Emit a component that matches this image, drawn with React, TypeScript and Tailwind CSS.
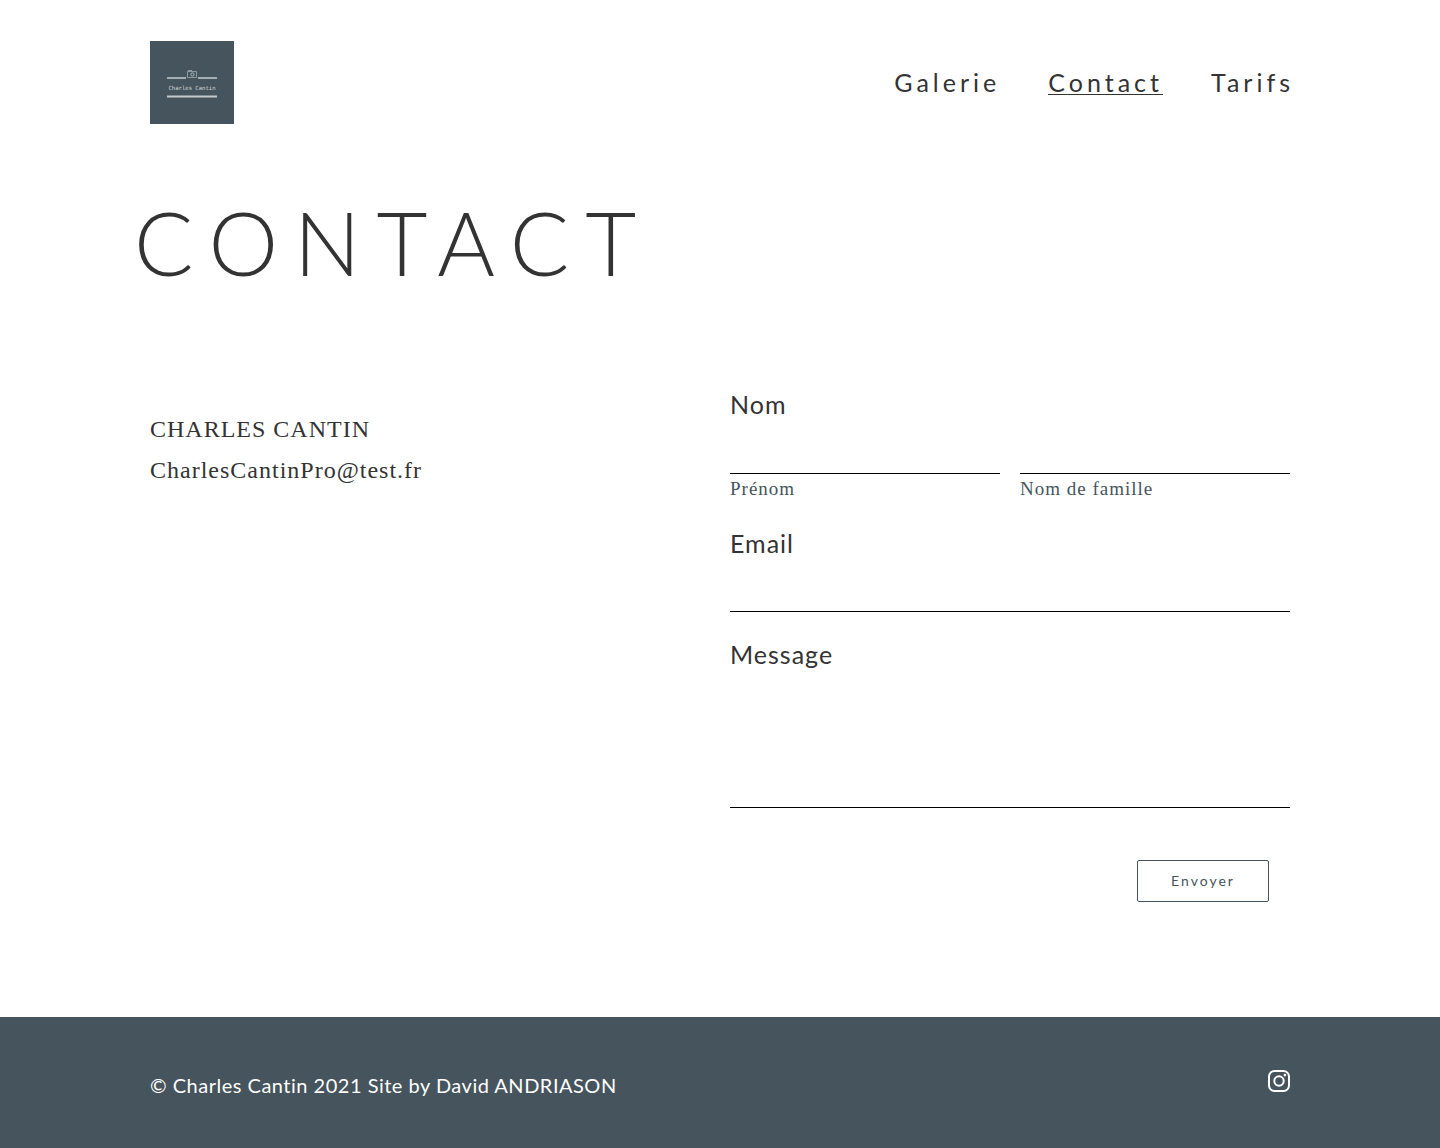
import React from "react";

const sans = "font-['Lato','Open_Sans',sans-serif]";
const serif = "font-['Liberation_Serif',serif]";
const fieldTitle = "block text-[25px] leading-8 tracking-[1px] text-[#333]";
const fieldLine = "block w-full border-0 border-b border-black bg-transparent text-[20px] text-[#333] outline-none";
const fieldHint = "text-[19px] leading-[30px] tracking-[1px] text-[#46545d]";
const navLink = "border-b leading-6";

function Logo() {
  return (
    <svg viewBox="0 0 84 83" className="h-[83px] w-[84px]" role="img" aria-label="Charles Cantin">
      <rect width="84" height="83" fill="#46545d" />
      <g fill="none" stroke="#a5aeb3">
        <path d="M17 37h19M48 37h19" strokeWidth="2" />
        <path d="M17 55.500h50" stroke="#c5cacd" strokeWidth="2" />
        <g stroke="#8f9aa0" strokeWidth="1">
          <path d="M37.500 30.500h9v6h-9z" />
          <path d="M38 29.500h4" />
          <circle cx="42.500" cy="33.500" r="1.600" stroke="#b3babd" />
        </g>
      </g>
      <text x="42" y="48.500" textAnchor="middle" fontSize="5.600" fill="#d3d7d9" fontFamily="DejaVu Sans Mono, monospace">
        Charles Cantin
      </text>
    </svg>
  );
}

function InstagramIcon() {
  return (
    <svg viewBox="0 0 22 22" className="size-[22px]" fill="none" stroke="white" strokeWidth="2" aria-hidden="true">
      <rect x="1" y="1" width="20" height="20" rx="5.500" />
      <circle cx="11" cy="11" r="4.700" />
      <circle cx="16.900" cy="5.100" r="1.300" fill="white" stroke="none" />
    </svg>
  );
}

export default function App() {
  return (
    <div className={`flex min-h-screen flex-col bg-white text-[#333] ${sans}`}>
      <header className="mx-auto flex w-full max-w-[1188px] flex-wrap items-center justify-between gap-6 px-6 pt-[41px]">
        <a href="#accueil">
          <Logo />
        </a>
        <nav className="-mr-1 flex flex-wrap gap-12 text-[25px] tracking-[4px]">
          <a href="#galerie" className={`${navLink} border-transparent`}>Galerie</a>
          <a href="#contact" className={`${navLink} border-[#333]`} aria-current="page">Contact</a>
          <a href="#tarifs" className={`${navLink} border-transparent`}>Tarifs</a>
        </nav>
      </header>

      <main className="mx-auto w-full max-w-[1188px] grow px-6 pb-[115px]">
        <h1 className="-ml-4 mt-[66px] text-[88px] leading-[104px] font-light tracking-[16px]">CONTACT</h1>

        <div className="mt-[94px] grid gap-5 md:grid-cols-2">
          <address className={`pt-[21px] text-[24px] leading-[41px] tracking-[1px] not-italic ${serif}`}>
            <p>CHARLES CANTIN</p>
            <p>
              <a href="mailto:CharlesCantinPro@test.fr">CharlesCantinPro@test.fr</a>
            </p>
          </address>

          <form onSubmit={(e) => e.preventDefault()}>
            <fieldset>
              <legend className={fieldTitle}>Nom</legend>
              <div className="grid grid-cols-2 gap-5">
                <div className="flex flex-col-reverse">
                  <label htmlFor="prenom" className={`${fieldHint} ${serif}`}>Prénom</label>
                  <input id="prenom" type="text" className={`${fieldLine} h-[54px]`} />
                </div>
                <div className="flex flex-col-reverse">
                  <label htmlFor="nom" className={`${fieldHint} ${serif}`}>Nom de famille</label>
                  <input id="nom" type="text" className={`${fieldLine} h-[54px]`} />
                </div>
              </div>
            </fieldset>
            <label htmlFor="email" className={`${fieldTitle} mt-[23px]`}>Email</label>
            <input id="email" type="email" className={`${fieldLine} h-[53px]`} />
            <label htmlFor="message" className={`${fieldTitle} mt-[26px]`}>Message</label>
            <textarea id="message" className={`${fieldLine} h-[138px] resize-none`} />
            <div className="mt-[52px] flex justify-end pr-[21px]">
              <button type="submit" className="h-[42px] w-[132px] rounded-xs border border-[#46545d] pb-0.5 text-[14px] tracking-[2px] text-[#46545d]">
                Envoyer
              </button>
            </div>
          </form>
        </div>
      </main>

      <footer className="bg-[#46545d] text-white">
        <div className="mx-auto flex w-full max-w-[1188px] items-start justify-between gap-6 px-6 pt-[53px] pb-12">
          <p className="text-[20px] leading-[30px] tracking-wide">© Charles Cantin 2021 Site by David ANDRIASON</p>
          <a href="#instagram" aria-label="Instagram">
            <InstagramIcon />
          </a>
        </div>
      </footer>
    </div>
  );
}
